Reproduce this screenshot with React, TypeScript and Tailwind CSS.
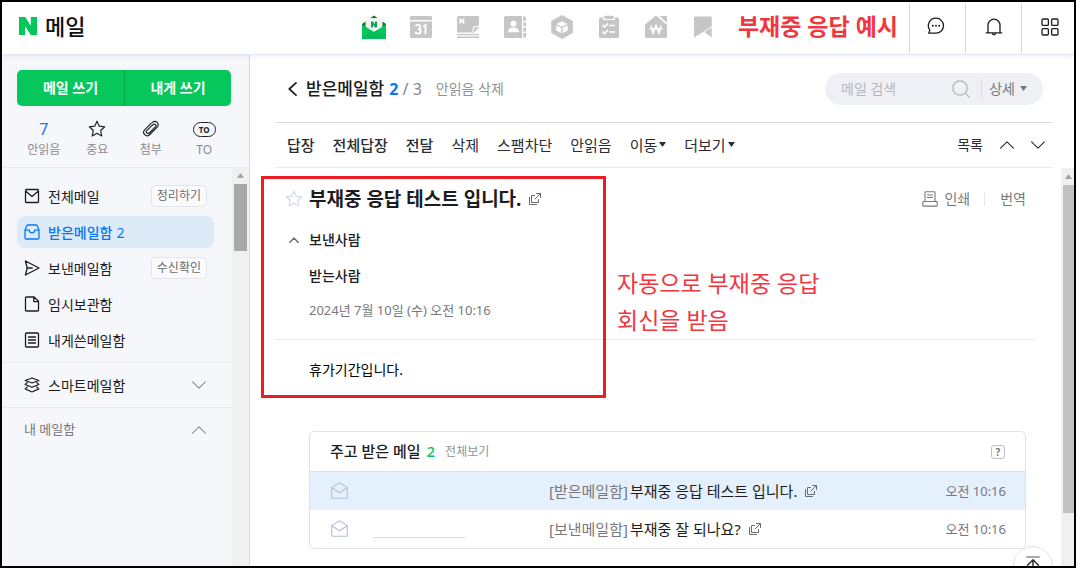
import React from "react";

type IconProps = { className?: string };

const svgBase = { fill: "none", stroke: "currentColor", strokeLinecap: "round", strokeLinejoin: "round" } as const;

/* ---------- small shared drawings ---------- */

function Chevron({ dir, className = "" }: { dir: "up" | "down"; className?: string }) {
  return (
    <svg viewBox="0 0 14 8" className={className} {...svgBase} strokeWidth="1.1" aria-hidden="true">
      <path d={dir === "up" ? "M0.6 7.2 7 0.9l6.4 6.3" : "M0.6 0.8 7 7.1l6.4-6.3"} />
    </svg>
  );
}

function Caret({ className = "" }: IconProps) {
  return (
    <svg viewBox="0 0 7 5" className={`h-[5px] w-[7px] ${className}`} aria-hidden="true">
      <path d="M0 0h7L3.5 5z" fill="currentColor" />
    </svg>
  );
}

function NewWindow({ className = "" }: IconProps) {
  return (
    <svg viewBox="0 0 12 12" className={`h-3 w-3 ${className}`} {...svgBase} strokeWidth="1" aria-hidden="true">
      <path d="M7.500.5h4v4M11.200.8 6 6M5.500 2.500h-3v7h7v-3M.5 4.500v7h7" />
    </svg>
  );
}

function Star({ className = "" }: IconProps) {
  return (
    <svg viewBox="0 0 18 18" className={className} {...svgBase} strokeWidth="1.2" aria-hidden="true">
      <path d="M9 1.2l2.3 5 5.4.6-4 3.7 1.1 5.5L9 13.3 4.2 16l1.1-5.500-4-3.700 5.400-.600z" />
    </svg>
  );
}

function OpenMail({ className = "" }: IconProps) {
  return (
    <svg viewBox="0 0 17 17" className={className} {...svgBase} strokeWidth="1.1" aria-hidden="true">
      <path d="M.7 5.600 8.500.8l7.800 4.800v9.600q0 1-1 1H1.700q-1 0-1-1zM.9 5.800l7.600 4.900 7.600-4.900" />
    </svg>
  );
}

/* ---------- header ---------- */

const services: { name: string; icon: React.ReactNode }[] = [
  {
    name: "메일",
    icon: (
      <>
        <path d="M0 9 12 .5 24 9v3H0z" fill="#067d0c" />
        <path d="M3.500 4.500Q3.500 3 5 3h14q1.500 0 1.500 1.500V13L12 17.500 3.500 13z" fill="#f1f2f3" />
        <path d="M9 12.500V6.500h2l2 2.800V6.500h2v6h-2l-2-2.800v2.800z" fill="#07a24b" />
        <path d="M0 9.500 12 17l12-7.500V24H0z" fill="#03c75a" />
        <path d="M0 24 9.300 15.300 12 17l2.700-1.700L24 24z" fill="#0bb657" opacity=".6" />
      </>
    ),
  },
  {
    name: "캘린더",
    icon: (
      <>
        <path d="M1 2.500Q1 1 2.500 1h19Q23 1 23 2.500V5H1zM1 6.500h22v15q0 1.500-1.500 1.500h-19Q1 23 1 21.500z" fill="#c6c6c6" />
        <path
          d="M6.500 11.200q.8-1.300 2.500-1.300 2.300 0 2.300 2.100 0 2-2.500 2 2.900 0 2.900 2.300 0 2.300-2.700 2.300-2 0-2.900-1.600M14.200 11.500l2.300-1.400v8.800"
          fill="none"
          stroke="#fff"
          strokeWidth="1.900"
        />
      </>
    ),
  },
  {
    name: "메모",
    icon: (
      <>
        <path d="M2.500 1h19Q23 1 23 2.500v7.800q-3.200 1.400-6 1 .300 4.500-2.200 6.200H1V2.500Q1 1 2.500 1z" fill="#c6c6c6" />
        <path d="M23 11.800v.7l-6.500 6q1.800-2.200 1.800-5.700 2.500 0 4.700-1z" fill="#c6c6c6" />
        <path d="M23 12.200l-7 6.300h-1.200q3-1.600 3.200-5.700 2.700.1 5-.6z" fill="#c6c6c6" />
        <path d="M1 19.600h22M1 22.300h22" fill="none" stroke="#c6c6c6" strokeWidth="1.400" />
        <path d="M3.500 8.500v-5H5l1.900 2.600V3.500h1.500v5H6.900L5 5.900v2.600z" fill="#fff" />
      </>
    ),
  },
  {
    name: "주소록",
    icon: (
      <>
        <path d="M2.500 1H19v22H2.500Q1 23 1 21.500v-19Q1 1 2.500 1zM20.300 1q2.700 0 2.700 2v3h-2.700zM20.300 7.300H23v4h-2.700zM20.300 12.700H23v4h-2.700zM20.300 18H23v3q0 2-2.700 2z" fill="#c6c6c6" />
        <circle cx="10.500" cy="8.700" r="2.900" fill="#fff" />
        <path d="M5 17.200q0-4.700 5.500-4.700t5.500 4.700z" fill="#fff" />
      </>
    ),
  },
  {
    name: "마이박스",
    icon: (
      <>
        <path d="M12 0l10.800 6v12L12 24 1.200 18V6z" fill="#c6c6c6" />
        <path d="M12 6.200l5.500 2.700L12 11.800 6.500 8.900zM6.300 10.200l5 2.600v5.400l-5-2.600zM17.700 10.200l-5 2.600v5.400l5-2.600z" fill="#fff" />
      </>
    ),
  },
  {
    name: "할일",
    icon: (
      <>
        <path d="M3.500 2.500H6V5h12V2.500h2.500Q22 2.500 22 4v17.500q0 1.500-1.500 1.500h-17Q2 23 2 21.500V4q0-1.500 1.500-1.500z" fill="#c6c6c6" />
        <rect x="7.200" y=".8" width="9.600" height="3.200" rx="1" fill="#c6c6c6" />
        <path d="M5.500 10l2 2L11 8.500M12.500 10.500h5.500M5.500 16.500l2 2L11 15M12.500 17h5.500" fill="none" stroke="#fff" strokeWidth="1.700" />
      </>
    ),
  },
  {
    name: "가계부",
    icon: (
      <>
        <path d="M1 9.500 11 1.300q1-.7 2 0L23 10v11.500q0 1.500-1.500 1.500h-19Q1 23 1 21.500z" fill="#c6c6c6" />
        <path d="M15.500 1H23v7z" fill="#c6c6c6" />
        <path d="M7 10.500l2 7.500 3-7.500 3 7.500 2-7.500M5.500 13.700h13" fill="none" stroke="#fff" strokeWidth="1.500" />
      </>
    ),
  },
  {
    name: "북마크",
    icon: (
      <>
        <path d="M4.200 1.500h16.500v9.700L12.500 16.800 3 22.500V2.700q0-1.200 1.200-1.200z" fill="#c6c6c6" />
        <path d="M20.700 12.500v10l-7.200-5.500z" fill="#c6c6c6" />
      </>
    ),
  },
];

function Header() {
  return (
    <header className="relative z-10 flex h-[53px] shrink-0 items-stretch border-b border-[#e3e7ef] bg-white shadow-[0_1px_4px_rgba(60,80,120,0.10)]">
      <h1 className="w-[348px] shrink-0">
        <a href="#home" className="flex h-full items-center pb-1 pl-[17px] text-[22px] leading-none font-medium text-[#111]">
          <svg viewBox="0 0 18 18" className="mr-2 h-[18px] w-[18px]" role="img" aria-label="네이버">
            <path d="M0 0h6.200l5.600 8.800V0H18v18h-6.200L6.200 9.200V18H0z" fill="#03c75a" />
          </svg>
          메일
        </a>
      </h1>
      <nav className="flex" aria-label="서비스">
        {services.map((s) => (
          <a key={s.name} href="#service" aria-label={s.name} className="flex w-[47px] items-center justify-center pb-[2px]">
            <svg viewBox="0 0 24 24" className="h-6 w-6" aria-hidden="true">
              {s.icon}
            </svg>
          </a>
        ))}
      </nav>
      <p className="ml-auto flex items-center pr-[11px] pb-1 text-[23px] leading-none font-bold whitespace-nowrap text-[#f2363e]">부재중 응답 예시</p>
      <div className="-mr-[3px] flex shrink-0">
        <button aria-label="톡톡" className="flex w-14 items-center justify-center border-l border-[#dcdcdc] pr-1 pb-1 text-[#1b1b1b]">
          <svg viewBox="0 0 18 18" className="h-[18px] w-[18px]" {...svgBase} strokeWidth="1.300" aria-hidden="true">
            <path d="M9 1.200a7.500 7.500 0 1 1 0 15H1.800l1-3.100A7.500 7.500 0 0 1 9 1.200z" />
            <path d="M5.800 8.800h.01M9 8.800h.01M12.200 8.800h.01" strokeWidth="1.900" />
          </svg>
        </button>
        <button aria-label="알림" className="flex w-14 items-center justify-center border-l border-[#dcdcdc] pb-[2px] text-[#1b1b1b]">
          <svg viewBox="0 0 18 18" className="h-[18px] w-[18px]" {...svgBase} strokeWidth="1.300" aria-hidden="true">
            <path d="M1.300 14.800h15.400M3 14.600V7.200a6 6 0 0 1 12 0v7.400M7.300 15q.2 1.900 1.700 1.900t1.700-1.900" />
          </svg>
        </button>
        <button aria-label="서비스 더보기" className="flex w-14 items-center justify-center border-l border-[#dcdcdc] pb-[2px] text-[#1b1b1b]">
          <svg viewBox="0 0 18 18" className="h-[18px] w-[18px]" {...svgBase} strokeWidth="1.300" aria-hidden="true">
            <rect x="1" y="1" width="6.400" height="6.400" rx="1.200" />
            <rect x="10.600" y="1" width="6.400" height="6.400" rx="1.200" />
            <rect x="1" y="10.600" width="6.400" height="6.400" rx="1.200" />
            <rect x="10.600" y="10.600" width="6.400" height="6.400" rx="1.200" />
          </svg>
        </button>
      </div>
    </header>
  );
}

/* ---------- sidebar ---------- */

const folders: { name: string; icon: React.ReactNode; tag?: string; count?: number; active?: boolean }[] = [
  { name: "전체메일", tag: "정리하기", icon: <path d="M2.500 1.500h11q1 0 1 1v11q0 1-1 1h-11q-1 0-1-1v-11q0-1 1-1zM1.900 3.300 8 8.600l6.100-5.300" /> },
  {
    name: "받은메일함",
    count: 2,
    active: true,
    icon: <path d="M4 1h8q.9 0 1.200.8L15 6v8q0 1-1 1H2q-1 0-1-1V6l1.800-4.200Q3.100 1 4 1zM1.200 6.200h4.100q.2 2.600 2.700 2.600t2.700-2.600h4.100" />,
  },
  { name: "보낸메일함", tag: "수신확인", icon: <path d="M1.400 1 15 8 1.400 15 3.200 8zM3.300 8h4.900" /> },
  { name: "임시보관함", icon: <path d="M2.500 1h7.600l4.400 4.300V14q0 1-1 1h-11q-1 0-1-1V2q0-1 1-1zM9.800 1.200v4.400h4.500" /> },
  { name: "내게쓴메일함", icon: <path d="M2.500 1h11q1 0 1 1v12q0 1-1 1h-11q-1 0-1-1V2q0-1 1-1zM4.500 5h7M4.500 8h7M4.500 11h7" /> },
];

const filters: { label: string; icon: React.ReactNode }[] = [
  { label: "안읽음", icon: <span className="text-[16px] text-[#1778f2]">7</span> },
  { label: "중요", icon: <Star className="h-[18px] w-[18px] text-[#222]" /> },
  {
    label: "첨부",
    icon: (
      <svg viewBox="0 0 18 18" className="h-[18px] w-[18px] text-[#222]" {...svgBase} strokeWidth="1.200" aria-hidden="true">
        <path d="M9.300 3.200 2.700 9.800a3.500 3.500 0 0 0 0 4.900 3.500 3.500 0 0 0 4.900 0l7.600-7.600a3.300 3.300 0 0 0 0-4.700 3.300 3.300 0 0 0-4.700 0M9.800 5.700l-5 5a1.600 1.600 0 0 0 2.400 2.300l6.200-6.200a1.600 1.600 0 0 0-2.300-2.300z" />
      </svg>
    ),
  },
  {
    label: "TO",
    icon: <span className="rounded-full border border-[#222] px-[5px] text-[8px] leading-[13px] font-bold text-[#222]">TO</span>,
  },
];

function Sidebar() {
  return (
    <aside className="flex w-[248px] shrink-0 flex-col border-r border-[#d9dade] bg-[#f5f7fb]">
      <div className="pt-[15px] pr-[18px] pl-[15px]">
        <div className="grid h-9 grid-cols-2 overflow-hidden rounded-[5px] bg-[#06c75c] text-[14px] leading-5 font-bold text-white">
          <button>메일 쓰기</button>
          <button className="border-l border-[#04a84d]">내게 쓰기</button>
        </div>
        <div className="grid h-[61px] grid-cols-4 pt-[13px]">
          {filters.map((f) => (
            <button key={f.label} className="flex flex-col items-center text-[12px] leading-4 text-[#8a8b90]">
              <span className="mb-[3px] flex h-5 items-center">{f.icon}</span>
              <span>{f.label}</span>
            </button>
          ))}
        </div>
      </div>
      <div className="flex min-h-0 flex-1">
        <nav className="min-w-0 flex-1 border-t border-[#e8eaef] text-[14px]" aria-label="메일함">
          <ul className="flex flex-col gap-1 pt-3 pr-[18px] pb-[6px] pl-[15px]">
            {folders.map((f) => (
              <li
                key={f.name}
                className={`flex h-8 items-center rounded-lg pr-[7px] pl-[7px] ${f.active ? "bg-[#ddebf8] font-medium text-[#0a76f1]" : "text-[#1c1c20]"}`}
              >
                <a href="#folder" className="flex items-center">
                  <svg viewBox="0 0 16 16" className="mr-2 h-4 w-4" {...svgBase} strokeWidth="1.300" aria-hidden="true">
                    {f.icon}
                  </svg>
                  {f.name}
                  {f.count !== undefined && <span className="ml-1 font-normal">{f.count}</span>}
                </a>
                {f.tag && (
                  <button className="ml-auto h-[22px] rounded border border-[#e4e5ea] bg-[#fafbfd] px-[5px] text-[12px] leading-5 text-[#6a6b70]">{f.tag}</button>
                )}
              </li>
            ))}
          </ul>
          <button className="flex h-[45px] w-full items-center border-t border-[#e8eaef] pr-[26px] pl-[22px] text-[#1c1c20]">
            <svg viewBox="0 0 16 16" className="mr-2 h-4 w-4" {...svgBase} strokeWidth="1.200" aria-hidden="true">
              <path d="M8 1l6.800 2.500L8 6 1.200 3.500zM3.300 5.600 1.200 7.500 8 10.300l6.800-2.800-2.100-1.900M3.300 9.900l-2.100 2L8 15l6.800-3.100-2.100-2" />
            </svg>
            스마트메일함
            <Chevron dir="down" className="ml-auto h-2 w-[14px] text-[#8c8c90]" />
          </button>
          <button className="flex h-[45px] w-full items-center border-t border-[#e8eaef] pr-[26px] pl-[22px] text-[13px] text-[#77787d]">
            내 메일함
            <Chevron dir="up" className="ml-auto h-2 w-[14px] text-[#8c8c90]" />
          </button>
        </nav>
        <div className="flex w-[17px] flex-col items-center bg-[#f0f0f0]" aria-hidden="true">
          <span className="flex h-[17px] items-center text-[#a3a3a3]">
            <Caret className="rotate-180" />
          </span>
          <span className="h-[67px] w-[13px] bg-[#a8a8a8]" />
        </div>
      </div>
    </aside>
  );
}

/* ---------- reading pane ---------- */

function ListHeader() {
  return (
    <div className="mr-[21px] ml-[25px] flex h-[68px] shrink-0 items-center border-b border-[#d9d9d9]">
      <button aria-label="뒤로" className="ml-[13px]">
        <svg viewBox="0 0 9 14" className="h-[14px] w-[9px] text-[#1c1c20]" {...svgBase} strokeWidth="1.700" aria-hidden="true">
          <path d="M8 .9 1.300 7 8 13.100" />
        </svg>
      </button>
      <h2 className="ml-[9px] text-[17px] leading-6 font-medium text-[#1c1c20]">받은메일함</h2>
      <p className="ml-[5px] text-[16px] leading-6 text-[#85868b]">
        <strong className="text-[#0a76f1]">2</strong> / 3
      </p>
      <button className="ml-[14px] text-[14px] leading-6 text-[#929398]">안읽음 삭제</button>
      <form role="search" className="mr-[10px] ml-auto flex h-8 w-[218px] items-center rounded-full bg-[#eff0f6] pr-4 pl-4">
        <input
          type="search"
          aria-label="메일 검색"
          placeholder="메일 검색"
          className="min-w-0 flex-1 bg-transparent text-[14px] text-[#333] outline-none placeholder:text-[#b6b7be]"
        />
        <button type="button" aria-label="검색" className="mr-[11px]">
          <svg viewBox="0 0 18 18" className="h-[18px] w-[18px] text-[#b0b1b6]" {...svgBase} strokeWidth="1.200" aria-hidden="true">
            <circle cx="8" cy="8" r="7.200" />
            <path d="M13.200 13.200l4 4" />
          </svg>
        </button>
        <span className="mr-[7px] h-5 border-l border-[#dddee5]" />
        <button type="button" className="flex items-center gap-[5px] text-[14px] text-[#77787d]">
          상세
          <Caret />
        </button>
      </form>
    </div>
  );
}

function Toolbar() {
  return (
    <div className="mr-[21px] ml-[25px] flex h-[45px] shrink-0 items-center border-b border-[#ebebeb] pr-2 pb-px pl-[12px] text-[15px] text-[#2b2b30]">
      <div className="flex items-center gap-[18px] leading-6 whitespace-nowrap">
        <button className="font-medium">답장</button>
        <button className="font-medium">전체답장</button>
        <button className="font-medium">전달</button>
        <button>삭제</button>
        <button>스팸차단</button>
        <button>안읽음</button>
        <button className="flex items-center gap-[2px]">
          이동
          <Caret />
        </button>
        <button className="flex items-center gap-[2px]">
          더보기
          <Caret />
        </button>
      </div>
      <div className="ml-auto flex items-center gap-[17px]">
        <button className="text-[14px]">목록</button>
        <button aria-label="이전 메일">
          <Chevron dir="up" className="h-2 w-[14px]" />
        </button>
        <button aria-label="다음 메일">
          <Chevron dir="down" className="h-2 w-[14px]" />
        </button>
      </div>
    </div>
  );
}

const thread = [
  { box: "[받은메일함]", subject: "부재중 응답 테스트 입니다.", time: "오전 10:16", active: true },
  { box: "[보낸메일함]", subject: "부재중 잘 되나요?", time: "오전 10:16", active: false },
];

function Thread() {
  return (
    <section className="mr-[10px] ml-[34px] overflow-hidden rounded-[5px] border border-[#e1e2e6]">
      <div className="flex h-[39px] items-center px-5">
        <h4 className="text-[15px] font-medium text-[#1c1c20]">
          주고 받은 메일 <span className="ml-[2px] text-[#03c75a]">2</span>
        </h4>
        <button className="ml-[10px] text-[12px] text-[#929398]">전체보기</button>
        <button className="ml-auto h-[14px] w-[14px] rounded-[3px] border border-[#bfbfc3] text-[10px] leading-[12px] font-bold text-[#77787d]" aria-label="도움말">
          ?
        </button>
      </div>
      <table className="w-full table-fixed border-t border-[#e1e2e6] text-left text-[15px] leading-6">
        <tbody>
          {thread.map((m) => (
            <tr key={m.box} className={`h-[38px] ${m.active ? "bg-[#e4f0fc]" : ""}`}>
              <td className="w-[63px] p-0 pl-[21px]">
                <OpenMail className="h-[17px] w-[17px] text-[#b7bdda]" />
              </td>
              <td className="w-[176px] p-0">{!m.active && <div className="mt-[18px] w-[93px] border-b border-[#dedfe3]" />}</td>
              <td className="p-0 whitespace-nowrap text-[#1c1c20]">
                <a href="#mail" className="flex items-center">
                  <span className="mr-[2px] text-[#77787d]">{m.box}</span>
                  {m.subject}
                  <NewWindow className="ml-2 text-[#6a6b70]" />
                </a>
              </td>
              <td className="w-[100px] p-0 pr-[19px] text-right text-[13px] text-[#77787d]">{m.time}</td>
            </tr>
          ))}
        </tbody>
      </table>
    </section>
  );
}

function Message() {
  return (
    <article className="min-w-0 flex-1 pr-[25px] pl-[25px]">
      <div className="border-b border-[#ebebeb] pr-[10px] pl-[10px]">
        <div className="flex h-[62px] items-center">
          <button aria-label="중요 표시">
            <Star className="h-[18px] w-[18px] text-[#d3d6ea]" />
          </button>
          <h3 className="ml-[6px] text-[19px] leading-6 font-bold whitespace-nowrap text-[#1c1c20]">부재중 응답 테스트 입니다.</h3>
          <button aria-label="새 창으로 보기" className="ml-2">
            <NewWindow className="text-[#6a6b70]" />
          </button>
          <div className="ml-auto flex items-center text-[14px] leading-5 text-[#77787d]">
            <button className="flex items-center gap-[6px]">
              <svg viewBox="0 0 16 16" className="h-4 w-4" {...svgBase} strokeWidth="1.100" aria-hidden="true">
                <path d="M3 10.500V1.500q0-.8.8-.8h8.400q.8 0 .8.800v9M5.500 4h5M5.500 6.500h5M1.500 10.500h13q.7 0 .7.700v3.100q0 .8-.8.800H1.600q-.8 0-.8-.8v-3.100q0-.7.7-.7z" />
              </svg>
              인쇄
            </button>
            <span className="mr-[15px] ml-[14px] h-[14px] border-l border-[#e6e6e9]" />
            <button>번역</button>
          </div>
        </div>
        <div className="grid grid-cols-[24px_1fr] text-[14px] leading-9 font-medium text-[#1c1c20]">
          <button aria-label="접기" className="flex h-5 items-center pl-1">
            <svg viewBox="0 0 10 6" className="h-[6px] w-[10px] text-[#6a6b70]" {...svgBase} strokeWidth="1.400" aria-hidden="true">
              <path d="M.7 5.400 5 1l4.300 4.400" />
            </svg>
          </button>
          <p className="h-7 leading-5">보낸사람</p>
          <p className="col-start-2">받는사람</p>
          <p className="col-start-2 pb-[13px] text-[13px] leading-8 font-normal text-[#77787d]">2024년 7월 10일 (수) 오전 10:16</p>
        </div>
      </div>
      <p className="h-[91px] pt-[19px] pl-[34px] text-[14px] leading-[22px] text-black">휴가기간입니다.</p>
      <Thread />
      <div className="absolute top-[121px] left-[11px] h-[222px] w-[345px] border-[3px] border-[#ee1c25]" aria-hidden="true" />
      <p className="absolute top-[210px] left-[367px] text-[23px] leading-[37px] whitespace-nowrap text-[#f2363e]">
        자동으로 부재중 응답
        <br />
        회신을 받음
      </p>
    </article>
  );
}

export default function App() {
  return (
    <div className="flex h-screen flex-col overflow-hidden border-2 border-black bg-white font-['Noto_Sans','Noto_Sans_CJK_KR',sans-serif]">
      <Header />
      <div className="flex min-h-0 flex-1">
        <Sidebar />
        <main className="relative flex min-w-0 flex-1 flex-col overflow-hidden">
          <ListHeader />
          <Toolbar />
          <div className="flex min-h-0 flex-1">
            <Message />
            <div className="flex w-[13px] shrink-0 flex-col items-end bg-[#f0f0f0]" aria-hidden="true">
              <span className="flex h-[17px] items-center pr-[2px] text-[#a3a3a3]">
                <Caret className="rotate-180" />
              </span>
              <span className="h-[82.5%] w-[11px] bg-[#c1c1c1]" />
            </div>
          </div>
          <button
            aria-label="맨 위로"
            className="absolute right-[21px] -bottom-5 flex h-10 w-10 justify-center rounded-full border border-[#e3e3e6] bg-white pt-[9px] text-[#333]"
          >
            <svg viewBox="0 0 14 16" className="h-4 w-[14px]" {...svgBase} strokeWidth="1.500" aria-hidden="true">
              <path d="M.8 1h12.400" stroke="#8c8c90" />
              <path d="M7 15V3.800M1.500 9.200 7 3.800l5.500 5.400" />
            </svg>
          </button>
        </main>
      </div>
    </div>
  );
}
